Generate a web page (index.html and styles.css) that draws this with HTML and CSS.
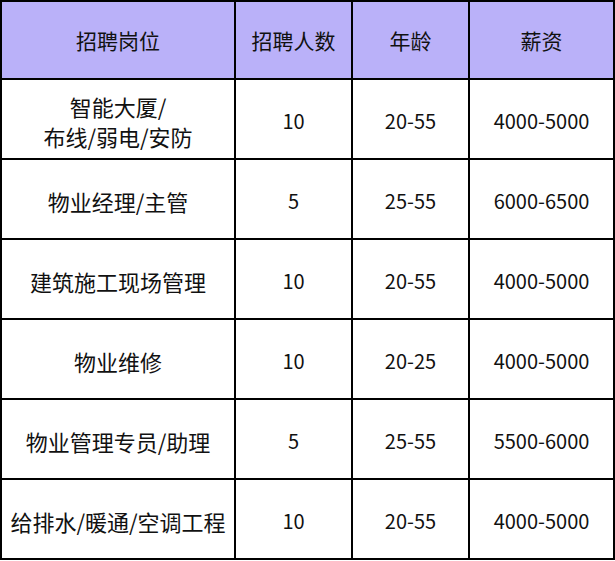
FILE: index.html
```html
<!DOCTYPE html>
<html lang="zh-CN">
<head>
<meta charset="utf-8">
<title>招聘信息</title>
<link rel="stylesheet" href="styles.css">
</head>
<body>
<div class="jobs">
  <div class="cell head">招聘岗位</div>
  <div class="cell head">招聘人数</div>
  <div class="cell head">年龄</div>
  <div class="cell head">薪资</div>

  <div class="cell title">智能大厦/<br>布线/弱电/安防</div>
  <div class="cell num">10</div>
  <div class="cell num">20-55</div>
  <div class="cell num">4000-5000</div>

  <div class="cell title">物业经理/主管</div>
  <div class="cell num">5</div>
  <div class="cell num">25-55</div>
  <div class="cell num">6000-6500</div>

  <div class="cell title">建筑施工现场管理</div>
  <div class="cell num">10</div>
  <div class="cell num">20-55</div>
  <div class="cell num">4000-5000</div>

  <div class="cell title">物业维修</div>
  <div class="cell num">10</div>
  <div class="cell num">20-25</div>
  <div class="cell num">4000-5000</div>

  <div class="cell title">物业管理专员/助理</div>
  <div class="cell num">5</div>
  <div class="cell num">25-55</div>
  <div class="cell num">5500-6000</div>

  <div class="cell title">给排水/暖通/空调工程</div>
  <div class="cell num">10</div>
  <div class="cell num">20-55</div>
  <div class="cell num">4000-5000</div>
</div>
</body>
</html>
```

FILE: styles.css
```css
html, body {
  margin: 0;
  padding: 0;
  background: #ffffff;
}

.jobs {
  display: grid;
  grid-template-columns: 234px 117px 117px 145px;
  grid-template-rows: 78px repeat(6, 80px);
  width: 615px;
  border-left: 2px solid #000;
  border-top: 2px solid #000;
  box-sizing: border-box;
  font-family: "Noto Sans CJK SC", "Noto Sans", sans-serif;
  color: #111;
}

.cell {
  display: flex;
  align-items: center;
  justify-content: center;
  text-align: center;
  border-right: 2px solid #000;
  border-bottom: 2px solid #000;
  box-sizing: border-box;
  font-size: 22px;
  line-height: 30px;
  padding-top: 3px;
}

.head {
  background: #bab1f9;
  font-size: 21px;
  padding-top: 0;
}

.num {
  font-size: 20px;
}
```
